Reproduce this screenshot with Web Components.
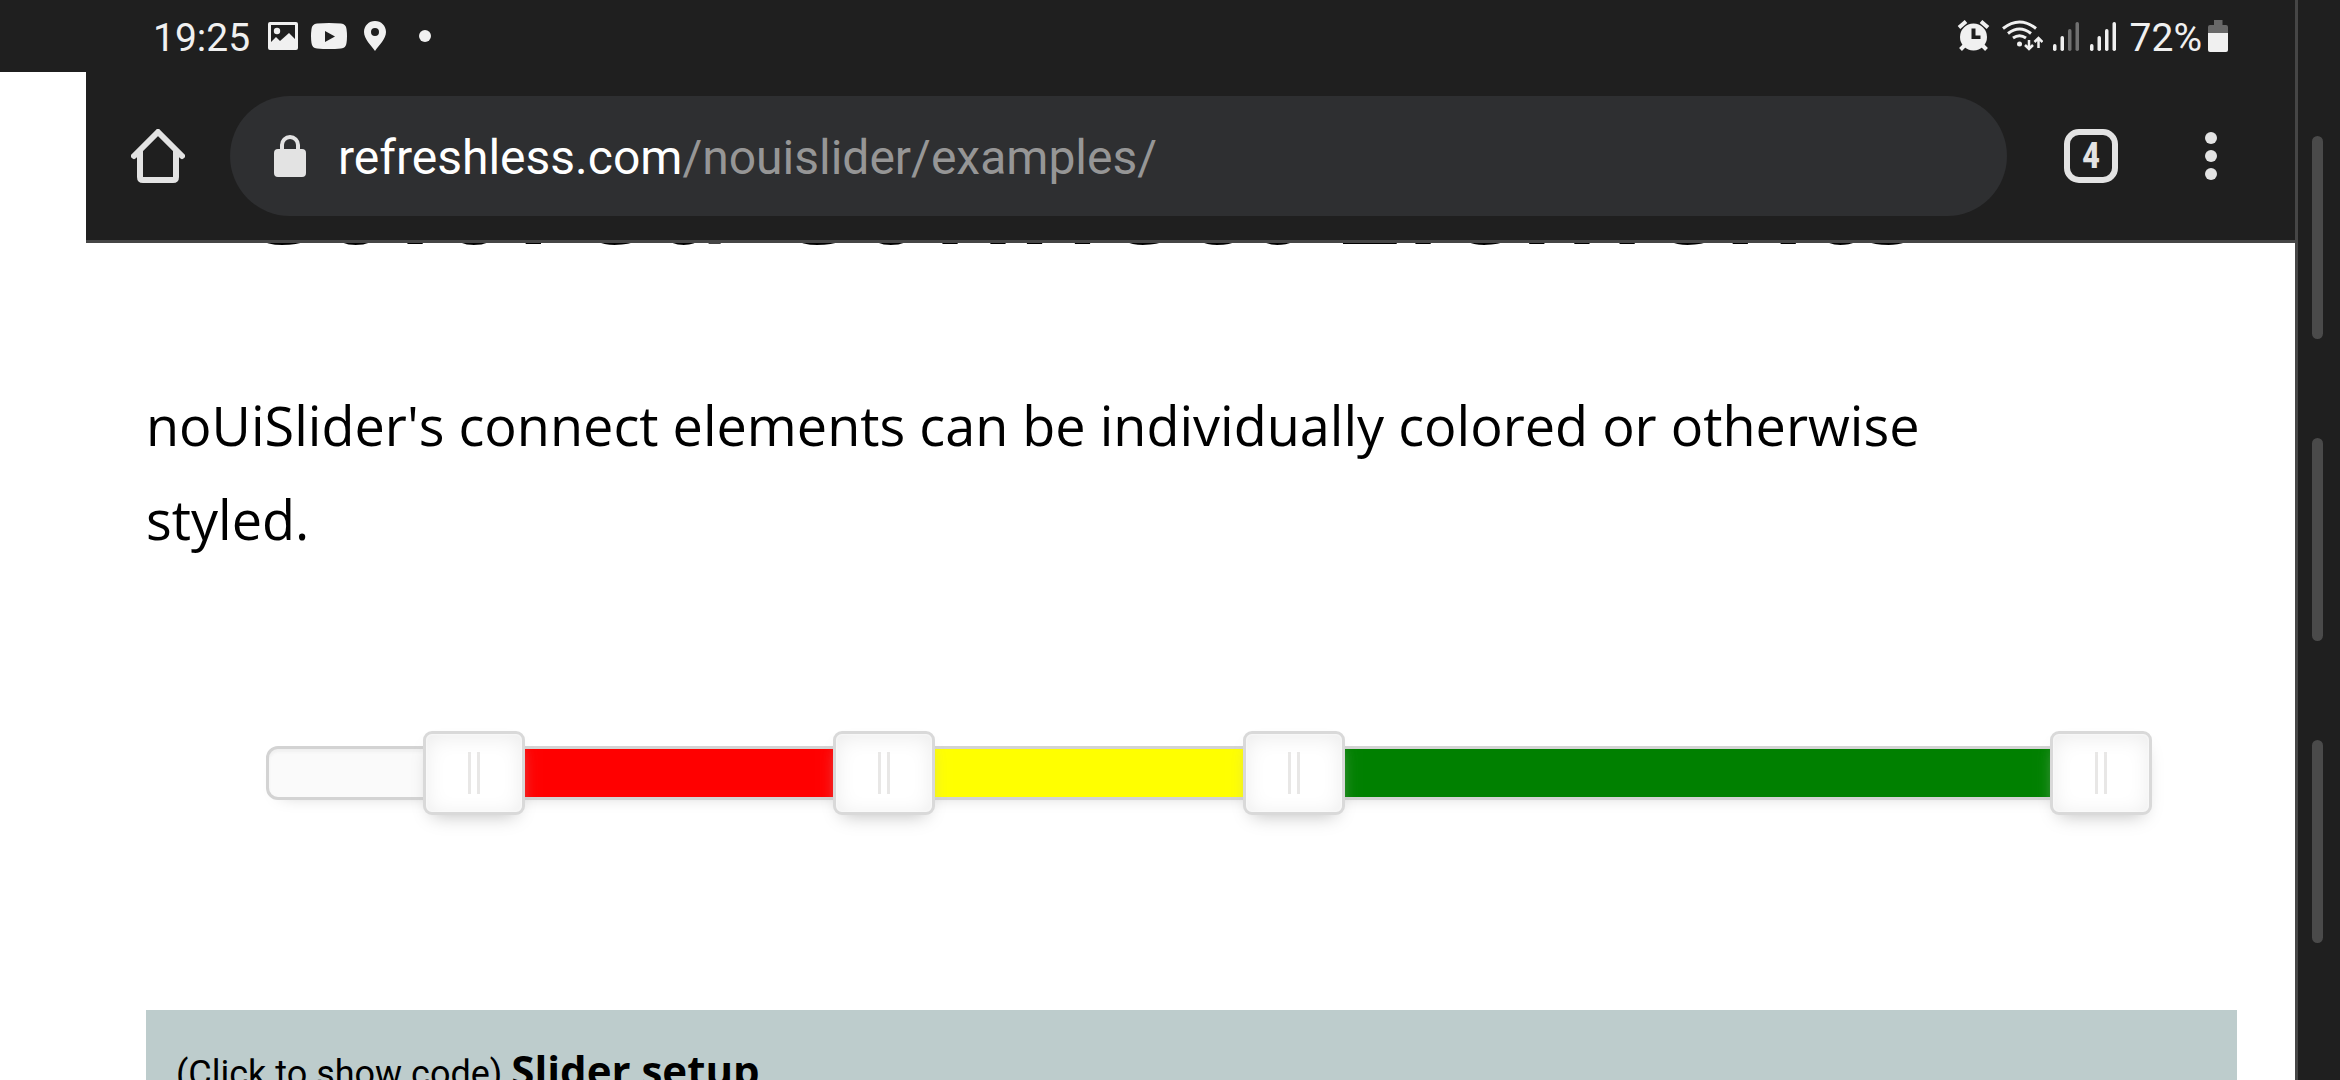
<!DOCTYPE html>
<html lang="en">
<head>
<meta charset="utf-8">
<title>noUiSlider - Examples</title>
<style>
html, body { margin: 0; height: 100%; background: #fff; overflow: hidden; }
</style>
</head>
<body>
<phone-screen>
  <status-bar slot="status" time="19:25" battery="72%"></status-bar>
  <browser-toolbar slot="toolbar" host="refreshless.com" path="/nouislider/examples/" tabs="4"></browser-toolbar>
  <example-section heading="Colored Connect Elements">
    <span slot="intro">noUiSlider's connect elements can be individually colored or otherwise styled.</span>
    <color-slider min="2000" max="20000" values="4000,8000,12000,19872" colors="red,yellow,green"></color-slider>
    <code-toggle slot="code" hint="(Click to show code)">Slider setup</code-toggle>
  </example-section>
  <edge-panel slot="edge"></edge-panel>
</phone-screen>

<script>
class BaseElement extends HTMLElement {
  connectedCallback() {
    if (this.shadowRoot) return;
    this.attachShadow({ mode: 'open' }).innerHTML = this.render();
  }
}

customElements.define('phone-screen', class extends BaseElement {
  render() {
    return `<style>
      :host { display: flex; height: 100vh; overflow: hidden; color: #000; }
      .main { flex: 1; min-width: 0; display: flex; flex-direction: column; }
      .browser { flex: 1; min-height: 0; margin-left: 86px; display: flex; flex-direction: column; }
      main { flex: 1; min-height: 0; overflow: hidden; }
    </style>
    <div class="main">
      <slot name="status"></slot>
      <div class="browser">
        <slot name="toolbar"></slot>
        <main><slot></slot></main>
      </div>
    </div>
    <slot name="edge"></slot>`;
  }
});

customElements.define('status-bar', class extends BaseElement {
  render() {
    return `<style>
      :host { display: flex; justify-content: space-between; align-items: center; height: 72px; flex: none;
        box-sizing: border-box; padding: 0 67px 0 153px; background: #1f1f1f; color: #f0f0f0;
        font: 39px/48px Roboto, sans-serif; }
      div { display: flex; align-items: center; }
      span { padding-top: 4px; }
      svg { display: block; fill: #f0f0f0; }
      .left { gap: 10px; }
      .left span { margin-right: 5px; }
      .left .pin { margin: 0 23px 0 7px; }
      .right { gap: 9px; }
      .right .wifi { margin-left: 3px; }
      .charge { gap: 6px; margin-left: 4px; }
    </style>
    <div class="left">
      <span>${this.getAttribute('time')}</span>
      <svg width="36" height="32" viewBox="0 0 36 32"><path fill-rule="evenodd" d="M5 2h26a2 2 0 0 1 2 2v24a2 2 0 0 1-2 2H5a2 2 0 0 1-2-2V4a2 2 0 0 1 2-2zM6 5v17l5-5 4 4 9-8 6 6V5z"/><circle cx="12" cy="11" r="3.2"/></svg>
      <svg width="36" height="32" viewBox="0 0 36 32"><path fill-rule="evenodd" d="M6 3.500Q18 2.500 30 3.500Q35 4 35.500 9Q36.500 16 35.500 23Q35 28 30 28.500Q18 29.500 6 28.500Q1 28 .5 23Q-.5 16 .5 9Q1 4 6 3.500zM14 11v11l10-5.500z"/></svg>
      <svg class="pin" width="22" height="32" viewBox="0 0 22 32"><path fill-rule="evenodd" d="M11 1c6.200 0 11 4.800 11 11 0 7-7 13-11 19C7 25 0 19 0 12 0 5.800 4.800 1 11 1zM11 8a4 4 0 1 0 0 8 4 4 0 0 0 0-8z"/></svg>
      <svg width="12" height="12" viewBox="0 0 12 12"><circle cx="6" cy="6" r="6"/></svg>
    </div>
    <div class="right">
      <svg width="33" height="32" viewBox="0 0 33 32"><path d="M2 7.500l7-6M31 7.500l-7-6M8 25l-4.500 4.500M25 25l4.500 4.500" stroke="#f0f0f0" stroke-width="4"/><path fill-rule="evenodd" d="M16.500 3.500a13.500 13.500 0 1 0 0 27 13.500 13.500 0 0 0 0-27zM14.500 8.500h4v7h5v3.500h-9z"/></svg>
      <svg class="wifi" width="41" height="32" viewBox="0 0 41 32"><g fill="none" stroke="#f0f0f0" stroke-width="3"><path d="M1 8.500Q17.500-4.500 34 8.500M6 13.500Q17.500 4.500 29 13.500M11 18Q17.500 13.500 24 18"/><path d="M27 20v8M23 25l4 4 4-4M36.500 28V19M32.500 22l4-4 4 4" stroke-width="2.500"/></g><circle cx="17.500" cy="24" r="2.500"/></svg>
      <svg width="28" height="32" viewBox="0 0 28 32"><rect x="1" y="24" width="3.500" height="7" rx="1.700"/><rect x="8.500" y="16" width="3.500" height="15" rx="1.700"/><g fill="#707070"><rect x="16" y="9" width="3.500" height="22" rx="1.700"/><rect x="23.500" y="2" width="3.500" height="29" rx="1.700"/></g></svg>
      <svg width="28" height="32" viewBox="0 0 28 32"><rect x="1" y="24" width="3.500" height="7" rx="1.700"/><rect x="8.500" y="16" width="3.500" height="15" rx="1.700"/><rect x="16" y="9" width="3.500" height="22" rx="1.700"/><rect x="23.500" y="2" width="3.500" height="29" rx="1.700"/></svg>
      <div class="charge"><span>${this.getAttribute('battery')}</span>
      <svg width="20" height="32" viewBox="0 0 20 32"><path fill="#686868" d="M6 0h8.500v5H18a2 2 0 0 1 2 2v6H0V7a2 2 0 0 1 2-2h4z"/><path d="M0 13h20v17a2 2 0 0 1-2 2H2a2 2 0 0 1-2-2z"/></svg></div>
    </div>`;
  }
});

customElements.define('browser-toolbar', class extends BaseElement {
  render() {
    return `<style>
      :host { display: flex; align-items: center; flex: none; height: 168px; padding: 0 57px 0 45px;
        background: #1f1f1f; border-bottom: 3px solid #464646; font-family: Roboto, sans-serif; }
      button { appearance: none; border: 0; margin: 0; padding: 0; background: none; font: inherit; color: #e3e3e3; display: flex; align-items: center; }
      svg { display: block; fill: currentColor; }
      .url { flex: 1; min-width: 0; height: 120px; margin: 0 57px 0 45px; padding: 0 44px; gap: 32px;
        border-radius: 60px; background: #2e2f31; font-size: 48px; line-height: 60px; text-align: left; }
      .text { padding-top: 4px; white-space: nowrap; }
      .host { color: #fff; }
      .path { color: #969696; }
      .tabs { box-sizing: border-box; width: 54px; height: 54px; border: 6px solid #e3e3e3; border-radius: 15px;
        justify-content: center; font: bold 36px/42px "Roboto Condensed", Roboto, sans-serif; }
      .menu { width: 54px; height: 54px; margin-left: 66px; justify-content: center; }
    </style>
    <button class="home" aria-label="Home"><svg width="54" height="54" viewBox="0 0 54 54"><path fill="none" stroke="currentColor" stroke-width="6" stroke-linejoin="round" stroke-linecap="round" d="M3 27L27 3l24 24M9 22v26q0 3 3 3h30q3 0 3-3V22"/></svg></button>
    <button class="url" aria-label="Address bar">
      <svg width="32" height="42" viewBox="0 0 32 42"><path d="M4 14h2v-4a10 10 0 0 1 20 0v4h2a4 4 0 0 1 4 4v20a4 4 0 0 1-4 4H4a4 4 0 0 1-4-4V18a4 4 0 0 1 4-4zm6 0h12v-4a6 6 0 0 0-12 0z" fill-rule="evenodd"/></svg>
      <span class="text"><span class="host">${this.getAttribute('host')}</span><span class="path">${this.getAttribute('path')}</span></span>
    </button>
    <button class="tabs" aria-label="Open tabs">${this.getAttribute('tabs')}</button>
    <button class="menu" aria-label="Menu"><svg width="12" height="48" viewBox="0 0 12 48"><circle cx="6" cy="6" r="6"/><circle cx="6" cy="24" r="6"/><circle cx="6" cy="42" r="6"/></svg></button>`;
  }
});

customElements.define('example-section', class extends BaseElement {
  render() {
    return `<style>
      :host { display: block; padding: 0 58px 0 60px; font: 54px/94px "Open Sans", sans-serif; --scrolled: 130px; }
      h2 { margin: calc(-1 * var(--scrolled)) 0 0; padding-left: 85px; font: 600 133px/160px "Open Sans", sans-serif; white-space: nowrap; }
      p { margin: 105px 0 0; max-width: 1860px; }
      .demo { margin: 180px 120px 210px; }
    </style>
    <h2>${this.getAttribute('heading')}</h2>
    <p><slot name="intro"></slot></p>
    <div class="demo"><slot></slot></div>
    <slot name="code"></slot>`;
  }
});

customElements.define('color-slider', class extends BaseElement {
  render() {
    const min = +this.getAttribute('min'), max = +this.getAttribute('max');
    const values = this.getAttribute('values').split(',').map(Number);
    const colors = this.getAttribute('colors').split(',');
    const bars = colors.map((c, i) => `<div style="background:${c};flex:${values[i + 1] - values[i]}"></div>`).join('');
    const inputs = values.map((v, i) => `<input type="range" step="any" min="${min}" max="${max}" value="${v}" aria-label="Handle ${i + 1}">`).join('');
    return `<style>
      :host { display: block; position: relative; box-sizing: border-box; height: 54px; border: 3px solid #d3d3d3; border-radius: 12px;
        background: #fafafa; box-shadow: inset 0 3px 3px #f0f0f0, 0 9px 18px -15px #bbb; }
      .connects { display: flex; height: 48px; border-radius: 9px; overflow: hidden; }
      input { appearance: none; position: absolute; left: -51px; top: -18px; width: calc(100% + 102px); height: 84px;
        margin: 0; background: none; pointer-events: none; }
      input::-webkit-slider-thumb { appearance: none; pointer-events: auto; box-sizing: border-box; width: 102px; height: 84px;
        border: 3px solid #d9d9d9; border-radius: 9px;
        background: linear-gradient(#e8e7e6, #e8e7e6) 42px 18px / 3px 42px no-repeat, linear-gradient(#e8e7e6, #e8e7e6) 51px 18px / 3px 42px no-repeat, #fff;
        box-shadow: inset 0 0 3px #fff, inset 0 3px 21px #ebebeb, 0 9px 18px -9px #bbb; }
    </style>
    <div class="connects"><div style="flex:${values[0] - min}"></div>${bars}<div style="flex:${max - values[values.length - 1]}"></div></div>
    ${inputs}`;
  }
});

customElements.define('code-toggle', class extends BaseElement {
  render() {
    return `<style>
      :host { display: block; }
      button { appearance: none; display: block; width: 100%; height: 120px; border: 0; margin: 0; padding: 0 30px; text-align: left;
        background: #bdcccc; color: #000; font: bold 42px/120px "Open Sans", sans-serif; }
      span { font: 36px Roboto, sans-serif; }
    </style>
    <button><span>${this.getAttribute('hint')}&nbsp;</span><slot></slot></button>`;
  }
});

customElements.define('edge-panel', class extends BaseElement {
  render() {
    return `<style>
      :host { display: flex; flex-direction: column; align-items: center; gap: 99px; flex: none; width: 42px; box-sizing: content-box;
        padding-top: 136px; border-left: 3px solid #464646; background: #1f1f1f; }
      i { width: 11px; height: 203px; border-radius: 6px; background: #4a4a4a; margin-right: 3px; }
    </style><i></i><i></i><i></i>`;
  }
});
</script>
</body>
</html>
